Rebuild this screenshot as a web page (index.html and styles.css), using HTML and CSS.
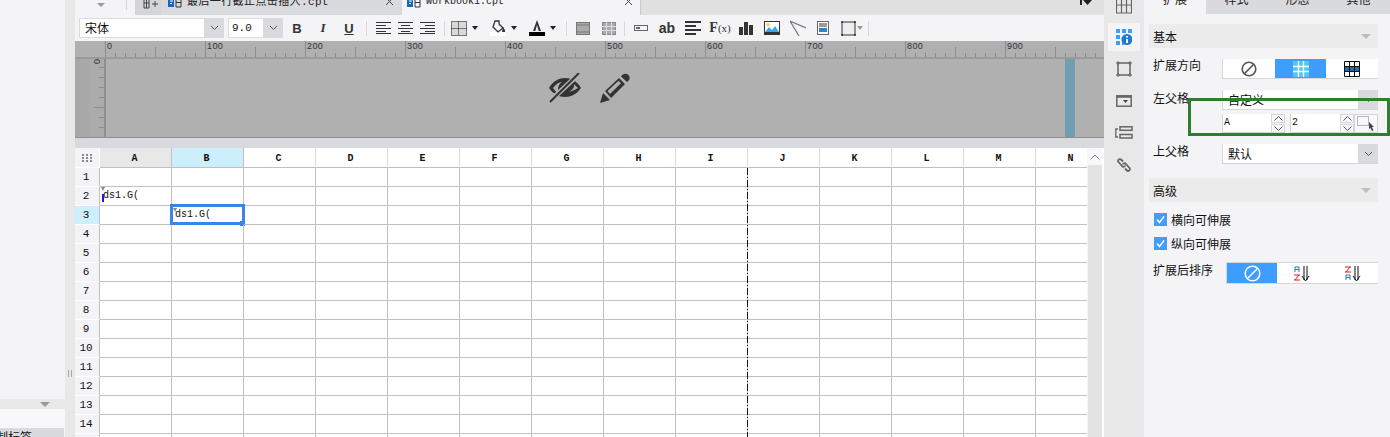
FILE: index.html
```html
<!DOCTYPE html>
<html lang="zh">
<head>
<meta charset="utf-8">
<title>报表设计器</title>
<link rel="stylesheet" href="styles.css">
</head>
<body>
<div class="app">
  <aside class="left">
    <div class="left-fill"></div>
    <div class="left-bar"><span class="tri"></span></div>
    <div class="left-white"></div>
    <div class="left-tab"><span>制标签</span></div>
  </aside>
  <div class="split"><span class="grip"></span></div>

  <main class="center">
    <div class="tabs">
      <div class="tab-lead"><span class="tri small"></span><span class="tab-sep"></span></div>
      <div class="tab tab-off">
        <svg class="plus-ic" width="16" height="10" viewBox="0 0 16 10"><path d="M1 -3V8H6V-3M1 3H6M3.5 -3V8M9 4H15M12 1V7" fill="none" stroke="#444"/></svg>
        <svg class="fr-ic" width="14" height="10" viewBox="0 0 14 10"><path d="M0 -2H6V7H0Z" fill="#1668b8"/><path d="M2 1H5M2 3.5H4" stroke="#fff"/><path d="M8 -2V7H13V-2M8 2.5H13" fill="none" stroke="#333"/></svg>
        <span class="tab-name cjk-mono">最后一行截止点击插入.cpt</span>
        <svg class="x-ic" width="10" height="10" viewBox="0 0 10 10"><path d="M1 -2L8 5M8 -2L1 5" stroke="#444" fill="none"/></svg>
      </div>
      <div class="tab tab-on">
        <svg class="fr-ic on" width="14" height="10" viewBox="0 0 14 10"><path d="M0 -2H6V7H0Z" fill="#1668b8"/><path d="M2 1H5M2 3.5H4" stroke="#fff"/><path d="M8 -2V7H13V-2M8 2.5H13" fill="none" stroke="#333"/></svg>
        <span class="tab-name mono">workbook1.cpt</span>
        <svg class="x-ic on" width="10" height="10" viewBox="0 0 10 10"><path d="M1 -2L8 5M8 -2L1 5" stroke="#444" fill="none"/></svg>
      </div>
      <div class="tab-rest">
        <svg class="more-ic" width="12" height="6" viewBox="0 0 12 6"><path d="M0 0H2V5H0ZM3 0H12L7.5 5Z" fill="#222"/></svg>
      </div>
    </div>

    <div class="toolbar">
      <div class="combo font"><span class="combo-val">宋体</span><span class="combo-btn"><svg width="9" height="6" viewBox="0 0 9 6"><path d="M1 1L4.5 4.5L8 1" fill="none" stroke="#555"/></svg></span></div>
      <div class="combo size"><span class="combo-val mono-l">9.0</span><span class="combo-btn"><svg width="9" height="6" viewBox="0 0 9 6"><path d="M1 1L4.5 4.5L8 1" fill="none" stroke="#555"/></svg></span></div>
      <button class="tb first b">B</button>
      <button class="tb i">I</button>
      <button class="tb u">U</button>
      <span class="sep s1"></span>
      <button class="tb w22"><svg width="15" height="12" viewBox="0 0 15 12"><path d="M0 .5H15M0 3.5H10M0 6.5H15M0 9.5H10M0 11.5H15" stroke="#333"/></svg></button>
      <button class="tb w22"><svg width="15" height="12" viewBox="0 0 15 12"><path d="M0 .5H15M3 3.5H12M0 6.5H15M3 9.5H12M0 11.5H15" stroke="#333"/></svg></button>
      <button class="tb w22"><svg width="15" height="12" viewBox="0 0 15 12"><path d="M0 .5H15M5 3.5H15M0 6.5H15M5 9.5H15M0 11.5H15" stroke="#333"/></svg></button>
      <span class="sep s2"></span>
      <button class="tb w16"><svg width="16" height="15" viewBox="0 0 16 15"><rect width="16" height="15" fill="#d8d8d8"/><path d="M.5 .5H15.500V14.500H.5ZM7.500 .5V14.500M.5 7.500H15.500" fill="none" stroke="#111" stroke-dasharray="1 1"/></svg></button>
      <span class="caret c1"></span>
      <button class="tb w16 m-fill"><svg width="16" height="16" viewBox="0 0 16 16"><rect y="12" width="16" height="4" fill="#fff"/><path d="M5 1H9V4L13 8L8 12L3 7Z" fill="none" stroke="#333" stroke-width="1.3"/><path d="M13 7L15 10V12H12Z" fill="#333"/></svg></button>
      <span class="caret c2"></span>
      <button class="tb w16 m-a"><svg width="16" height="16" viewBox="0 0 16 16"><path d="M4 11L8 0L12 11H9.7L8 5L6.300 11Z" fill="#333"/><rect y="12" width="16" height="4" fill="#000"/></svg></button>
      <span class="caret c3"></span>
      <span class="sep s3"></span>
      <button class="tb w14 m-g1"><svg width="14" height="13" viewBox="0 0 14 13"><rect x=".5" y=".5" width="13" height="12" fill="#aaa" stroke="#777"/><path d="M0 3H14M0 10H14" stroke="#777"/></svg></button>
      <button class="tb w14 m-g2"><svg width="14" height="13" viewBox="0 0 14 13"><rect x=".5" y=".5" width="13" height="12" fill="#aaa" stroke="#888"/><path d="M0 4.500H14M0 8.500H14M4.500 0V13M9.500 0V13" stroke="#ddd"/></svg></button>
      <span class="sep s4"></span>
      <button class="tb w14 m-f"><svg width="14" height="6" viewBox="0 0 14 6"><rect x=".5" y=".5" width="13" height="5" fill="none" stroke="#666"/><path d="M2 3H6" stroke="#666" stroke-width="2"/></svg></button>
      <button class="tb ab">ab</button>
      <button class="tb w16 m-para"><svg width="16" height="14" viewBox="0 0 16 14"><path d="M0 1H16M0 5H11M0 9H16M0 13H11" stroke="#333" stroke-width="2"/></svg></button>
      <button class="tb fx">F<small>(x)</small></button>
      <button class="tb w14 m-bar"><svg width="14" height="13" viewBox="0 0 14 13"><path d="M0 5H4V13H0ZM5 0H9V13H5ZM10 3H14V13H10Z" fill="#333"/></svg></button>
      <button class="tb w16 m-img"><svg width="16" height="14" viewBox="0 0 16 14"><rect x=".5" y=".5" width="15" height="13" fill="#fff" stroke="#333"/><rect y="11" width="16" height="3" fill="#333"/><path d="M1 11L5 6L8 9L11 5L15 11Z" fill="#39a7e6"/><circle cx="4" cy="3.500" r="1.500" fill="#f5c542"/></svg></button>
      <button class="tb w16 m-line"><svg width="16" height="16" viewBox="0 0 16 16"><path d="M0 1L16 8M0 1L9 16" fill="none" stroke="#777" stroke-width="1.200"/></svg></button>
      <button class="tb w12 m-doc"><svg width="12" height="14" viewBox="0 0 12 14"><rect x=".5" y=".5" width="11" height="13" fill="#fff" stroke="#666"/><path d="M2 3H10M2 5H10" stroke="#333"/><rect x="2" y="7" width="8" height="4" fill="#2d84c8"/></svg></button>
      <button class="tb w16 m-box"><svg width="15" height="15" viewBox="0 0 15 15"><rect x="1" y="1" width="13" height="13" fill="#eee" stroke="#333"/><path d="M0 1H2M13 1H15M0 14H2M13 14H15" stroke="#000"/></svg></button>
      <span class="caret grey"></span>
      <span class="sep s5"></span>
    </div>

    <div class="ruler-area">
      <div class="hruler">
        <div class="hr-inner">
          <span>0</span><span>100</span><span>200</span><span>300</span><span>400</span><span>500</span><span>600</span><span>700</span><span>800</span><span>900</span>
        </div>
      </div>
      <div class="page-row">
        <div class="gutter"></div>
        <div class="vruler"><span>0</span></div>
        <div class="page">
          <div class="page-icons">
            <svg width="32" height="30" viewBox="0 0 32 30"><path d="M0 15C4 8 10 5 16 5C22 5 28 8 32 15C28 21 22 24 16 24C10 24 4 21 0 15Z" fill="#333"/><path d="M4 15C7 11 10 9 13 9C9 11 8 17 10 21C8 20 6 18 4 15Z" fill="#b0b0b0"/><path d="M19 19C23 18 26 17 29 15C27 13 26 12 25 11C26 14 23 18 19 19Z" fill="#b0b0b0"/><path d="M0 29L30 1" stroke="#b0b0b0" stroke-width="5"/><path d="M1 29L30 0" stroke="#333" stroke-width="2"/></svg>
            <svg width="30" height="30" viewBox="0 0 30 30"><path d="M0 30L3 20L10 27Z" fill="#333"/><path d="M5 18L19 5L25 11L11 25ZM8.500 18.500L19.500 8M10.500 20.500" fill="#333"/><path d="M7.500 18L18.500 7.800L21 10.200L10 21Z" fill="#b0b0b0"/><path d="M21 3.500C23 .5 26 0 28.500 2C30.500 4.500 30 7 27 9Z" fill="#333"/></svg>
          </div>
          <div class="page-strip"></div>
          <div class="page-end"></div>
        </div>
      </div>
    </div>

    <div class="gap-bar"></div>

    <div class="sheet">
      <div class="sheet-clip">
        <table class="grid">
          <thead>
            <tr><th class="corner"><svg width="11" height="8" viewBox="0 0 11 8"><path d="M0 0h2v2H0zM4 0h2v2H4zM8 0h2v2H8zM0 3h2v2H0zM4 3h2v2H4zM8 3h2v2H8zM0 6h2v2H0zM4 6h2v2H4zM8 6h2v2H8z" fill="#8a8a8a"/></svg></th><th>A</th><th class="hot">B</th><th class="plain">C</th><th class="plain">D</th><th class="plain">E</th><th class="plain">F</th><th class="plain">G</th><th class="plain">H</th><th class="plain">I</th><th class="plain">J</th><th class="plain">K</th><th class="plain">L</th><th class="plain">M</th><th class="plain">N</th></tr>
          </thead>
          <tbody>
            <tr><th>1</th><td></td><td></td><td></td><td></td><td></td><td></td><td></td><td></td><td></td><td></td><td></td><td></td><td></td><td></td></tr>
            <tr><th>2</th><td class="val"><i class="mark blue"></i>ds1.G(</td><td></td><td></td><td></td><td></td><td></td><td></td><td></td><td></td><td></td><td></td><td></td><td></td><td></td></tr>
            <tr><th class="hot">3</th><td></td><td class="val sel">ds1.G(<b class="sel-box"><u class="handle"></u></b><i class="mark"></i></td><td></td><td></td><td></td><td></td><td></td><td></td><td></td><td></td><td></td><td></td><td></td><td></td></tr>
            <tr><th>4</th><td></td><td></td><td></td><td></td><td></td><td></td><td></td><td></td><td></td><td></td><td></td><td></td><td></td><td></td></tr>
            <tr><th>5</th><td></td><td></td><td></td><td></td><td></td><td></td><td></td><td></td><td></td><td></td><td></td><td></td><td></td><td></td></tr>
            <tr><th>6</th><td></td><td></td><td></td><td></td><td></td><td></td><td></td><td></td><td></td><td></td><td></td><td></td><td></td><td></td></tr>
            <tr><th>7</th><td></td><td></td><td></td><td></td><td></td><td></td><td></td><td></td><td></td><td></td><td></td><td></td><td></td><td></td></tr>
            <tr><th>8</th><td></td><td></td><td></td><td></td><td></td><td></td><td></td><td></td><td></td><td></td><td></td><td></td><td></td><td></td></tr>
            <tr><th>9</th><td></td><td></td><td></td><td></td><td></td><td></td><td></td><td></td><td></td><td></td><td></td><td></td><td></td><td></td></tr>
            <tr><th>10</th><td></td><td></td><td></td><td></td><td></td><td></td><td></td><td></td><td></td><td></td><td></td><td></td><td></td><td></td></tr>
            <tr><th>11</th><td></td><td></td><td></td><td></td><td></td><td></td><td></td><td></td><td></td><td></td><td></td><td></td><td></td><td></td></tr>
            <tr><th>12</th><td></td><td></td><td></td><td></td><td></td><td></td><td></td><td></td><td></td><td></td><td></td><td></td><td></td><td></td></tr>
            <tr><th>13</th><td></td><td></td><td></td><td></td><td></td><td></td><td></td><td></td><td></td><td></td><td></td><td></td><td></td><td></td></tr>
            <tr><th>14</th><td></td><td></td><td></td><td></td><td></td><td></td><td></td><td></td><td></td><td></td><td></td><td></td><td></td><td></td></tr>
            <tr><th></th><td></td><td></td><td></td><td></td><td></td><td></td><td></td><td></td><td></td><td></td><td></td><td></td><td></td><td></td></tr>
          </tbody>
        </table>
        <div class="page-break"></div>
      </div>
      <div class="vscroll">
        <div class="vs-up"><svg width="10" height="6" viewBox="0 0 10 6"><path d="M.5 5.500L5 1L9.500 5.500" fill="none" stroke="#888"/></svg></div>
        <div class="vs-thumb"></div>
      </div>
    </div>
  </main>

  <nav class="rail">
    <div class="rail-btn first"><svg width="16" height="18" viewBox="0 0 16 18"><path d="M.5 0V17H15.500V0M.5 9H15.500M5.500 0V17M10.500 0V17" fill="none" stroke="#666" stroke-width="1.200"/></svg></div>
    <div class="rail-btn active"><svg width="16" height="16" viewBox="0 0 16 16"><path d="M0 0h4v4H0zM6 0h4v4H6zM12 0h4v4h-4zM0 6h4v4H0zM0 12h4v4H0zM6 12h2v4H6z" fill="#3f9dff"/><circle cx="11" cy="10.500" r="5.500" fill="#1f7ad0"/><path d="M11 7v1.500M11 10v4" stroke="#fff" stroke-width="2"/></svg></div>
    <div class="rail-btn"><svg width="16" height="16" viewBox="0 0 16 16"><rect x="2" y="2" width="12" height="12" fill="none" stroke="#666" stroke-width="1.500"/><path d="M0 2H4M12 2H16M0 14H4M12 14H16M2 0V4M14 0V4M2 12V16M14 12V16" stroke="#666"/></svg></div>
    <div class="rail-btn"><svg width="16" height="12" viewBox="0 0 16 12"><rect x=".8" y=".8" width="14.400" height="10.400" fill="none" stroke="#666" stroke-width="1.500"/><rect x=".8" y=".8" width="14.400" height="2" fill="#666"/><path d="M7 5H12L9.500 8Z" fill="#444"/></svg></div>
    <div class="rail-btn"><svg width="18" height="14" viewBox="0 0 18 14"><rect x="5" y=".8" width="12" height="3.500" fill="none" stroke="#666" stroke-width="1.500"/><rect x="5" y="8.500" width="12" height="3.500" fill="none" stroke="#666" stroke-width="1.500"/><path d="M3 3H.8V11H3" fill="none" stroke="#666" stroke-width="1.300"/></svg></div>
    <div class="rail-btn"><svg width="16" height="16" viewBox="0 0 16 16"><path d="M7 4.500L5 2.500C3.500 1 1 3.500 2.500 5L6 9C7.500 10.500 9 9.500 9 8.500M9 11.500L11 13.500C12.500 15 15 12.500 13.500 11L10 7C8.500 5.500 7 6.500 7 7.500" fill="none" stroke="#666" stroke-width="1.800"/></svg></div>
  </nav>

  <section class="panel">
    <div class="ptabs">
      <div class="ptab on"><span>扩展</span></div>
      <div class="ptab"><span>样式</span></div>
      <div class="ptab"><span>形态</span></div>
      <div class="ptab"><span>其他</span></div>
    </div>
    <div class="phead first"><span>基本</span><span class="tri"></span></div>
    <div class="frow r-dir">
      <label class="flabel">扩展方向</label>
      <div class="seg">
        <span class="seg-item"><svg width="16" height="16" viewBox="0 0 16 16"><circle cx="8" cy="8" r="6.800" fill="none" stroke="#555" stroke-width="1.600"/><path d="M3 13L13 3" stroke="#555" stroke-width="1.600"/></svg></span>
        <span class="seg-item blue"><svg width="16" height="16" viewBox="0 0 16 16"><rect width="16" height="16" fill="#4cc9f0"/><path d="M5.500 0V16M10.500 0V16M0 5.500H16M0 10.500H16" stroke="#fff" stroke-width="1.400"/></svg></span>
        <span class="seg-item"><svg width="16" height="16" viewBox="0 0 16 16"><rect x=".5" y="5.500" width="15" height="5" fill="#2c6b9c"/><path d="M.5 .5H15.500V15.500H.5ZM5.500 0V16M10.500 0V16M0 5.500H16M0 10.500H16" fill="none" stroke="#111"/></svg></span>
      </div>
    </div>
    <div class="frow r-left">
      <label class="flabel">左父格</label>
      <div class="pcombo"><span>自定义</span><span class="pcombo-btn"><svg width="9" height="6" viewBox="0 0 9 6"><path d="M1 1L4.500 4.500L8 1" fill="none" stroke="#555"/></svg></span></div>
    </div>
    <div class="spin-row">
      <span class="sinput mono">A</span>
      <span class="spin"><i><svg width="9" height="5" viewBox="0 0 9 5"><path d="M.5 4.500L4.500 .5L8.500 4.500" fill="none" stroke="#555"/></svg></i><i><svg width="9" height="5" viewBox="0 0 9 5"><path d="M.5 .5L4.500 4.500L8.500 .5" fill="none" stroke="#555"/></svg></i></span>
      <span class="sinput second mono">2</span>
      <span class="spin"><i><svg width="9" height="5" viewBox="0 0 9 5"><path d="M.5 4.500L4.500 .5L8.500 4.500" fill="none" stroke="#555"/></svg></i><i><svg width="9" height="5" viewBox="0 0 9 5"><path d="M.5 .5L4.500 4.500L8.500 .5" fill="none" stroke="#555"/></svg></i></span>
      <span class="pick"><svg width="19" height="15" viewBox="0 0 19 15"><rect x=".5" y=".5" width="11" height="9" fill="none" stroke="#777" stroke-dasharray="1 1"/><path d="M12 6L17 11L15 11L16.500 14.500L15 15L13.500 12L12 13Z" fill="#444"/></svg></span>
    </div>
    <div class="frow r-top">
      <label class="flabel">上父格</label>
      <div class="pcombo"><span>默认</span><span class="pcombo-btn"><svg width="9" height="6" viewBox="0 0 9 6"><path d="M1 1L4.500 4.500L8 1" fill="none" stroke="#555"/></svg></span></div>
    </div>
    <div class="phead adv"><span>高级</span><span class="tri"></span></div>
    <div class="check c-first"><span class="box"><svg width="13" height="13" viewBox="0 0 13 13"><path d="M3 6.500L5.500 9.500L10 3.500" fill="none" stroke="#fff" stroke-width="1.500"/></svg></span>横向可伸展</div>
    <div class="check c-second"><span class="box"><svg width="13" height="13" viewBox="0 0 13 13"><path d="M3 6.500L5.500 9.500L10 3.500" fill="none" stroke="#fff" stroke-width="1.500"/></svg></span>纵向可伸展</div>
    <div class="frow r-sort">
      <label class="flabel sort">扩展后排序</label>
      <div class="seg sortseg">
        <span class="seg-item blue"><svg width="17" height="17" viewBox="0 0 17 17"><circle cx="8.500" cy="8.500" r="7.300" fill="none" stroke="#fff" stroke-width="1.500"/><path d="M3.500 13.500L13.500 3.500" stroke="#fff" stroke-width="1.500"/></svg></span>
        <span class="seg-item"><svg width="16" height="15" viewBox="0 0 16 15"><path d="M1 6V1H5V6M1 3.500H5" fill="none" stroke="#2f79a8"/><path d="M0 9H6M5 9L1 14M0 14H6" fill="none" stroke="#e8101a"/><path d="M10 0V14M13 0V14M8 10L11.500 15L15 10" fill="none" stroke="#111"/></svg></span>
        <span class="seg-item"><svg width="16" height="15" viewBox="0 0 16 15"><path d="M0 1H6M5 1L1 6M0 6H6" fill="none" stroke="#e8101a"/><path d="M1 14V9H5V14M1 11.500H5" fill="none" stroke="#2f79a8"/><path d="M10 0V14M13 0V14M8 10L11.500 15L15 10" fill="none" stroke="#111"/></svg></span>
      </div>
    </div>
  </section>
</div>
<div class="highlight"></div>
</body>
</html>
```

FILE: styles.css
```css
* { box-sizing: border-box; }
html, body { margin: 0; padding: 0; height: 437px; overflow: hidden; background: #f4f4f6; }
body { font: 12px "Noto Sans CJK SC", "Liberation Sans", sans-serif; color: #111; position: relative; }
svg { display: block; flex: none; overflow: hidden; }
.mono { font-family: "Liberation Mono", "Noto Sans CJK SC", monospace; }
.cjk-mono { font-family: "Liberation Mono", "Noto Sans CJK SC", monospace; }

.app { display: flex; width: 1390px; height: 437px; overflow: hidden; }

/* left */
.left { width: 65px; display: flex; flex-direction: column; background: #f4f4f6; }
.left-fill { height: 399px; }
.left-bar { height: 10px; background: #e8e8e8; display: flex; justify-content: flex-end; align-items: center; padding-right: 15px; }
.tri { display: block; width: 0; height: 0; border-left: 5px solid transparent; border-right: 5px solid transparent; border-top: 5px solid #9a9a9a; }
.tri.small { border-left-width: 4px; border-right-width: 4px; border-top-width: 4px; }
.left-white { height: 19px; background: #f8f8fa; }
.left-tab { flex: 1; background: #d9dadd; border-right: 1px solid #f4f4f6; overflow: hidden; font-size: 12px; line-height: 16px; padding-top: 1px; white-space: nowrap; }
.left-tab span { display: block; margin-left: -4px; }
.split { width: 10px; background: #e8e8e8; position: relative; }
.grip { position: absolute; left: 3px; top: 370px; width: 4px; height: 7px; border-left: 1px solid #aaa; border-right: 1px solid #aaa; }

/* center */
.center { width: 1029px; display: flex; flex-direction: column; background: #f4f4f6; }
.tabs { height: 15px; display: flex; overflow: hidden; flex: none; }
.tab-lead { width: 60px; display: flex; position: relative; padding: 3px 0 0 22px; }
.tab-sep { position: absolute; left: 51px; top: 0; width: 1px; height: 10px; background: #d5d5d5; }
.tab { display: flex; align-items: flex-start; overflow: hidden; }
.tab-off { width: 267px; background: linear-gradient(90deg, #d4d5d8 26px, #d9dadd 26px); padding-left: 8px; }
.tab-on { width: 239px; background: #f4f4f6; border-right: 1px solid #ccc; padding-left: 5px; }
.plus-ic { margin-right: 9px; }
.fr-ic { margin-right: 5px; }
.fr-ic.on { margin-right: 5px; }
.tab-name { font-size: 10px; line-height: 14px; margin-top: -5px; color: #222; white-space: nowrap; }
.tab-off .tab-name { width: 198px; font-size: 11px; letter-spacing: .4px; }
.tab-on .tab-name { width: 198px; letter-spacing: 0; }
.x-ic { margin-top: 0; }
.tab-rest { flex: 1; background: #e0e0e0; display: flex; justify-content: flex-end; padding-right: 12px; }

.toolbar { height: 26px; display: flex; align-items: center; padding-left: 4px; flex: none; background: #f4f4f6; }
.combo { display: flex; height: 20px; background: #fff; border: 1px solid #dcdde1; border-right: 0; }
.combo.font { width: 145px; }
.combo.size { width: 55px; margin-left: 4px; }
.combo-val { flex: 1; font-size: 12px; line-height: 18px; padding-left: 5px; }
.mono-l { font-family: "Liberation Mono", monospace; font-size: 11px; padding-left: 3px; }
.combo-btn { width: 20px; margin: -1px 0; background: #d9dadd; display: flex; align-items: center; justify-content: center; }
.tb { border: 0; background: none; padding: 0; width: 26px; height: 20px; display: flex; align-items: center; justify-content: center; color: #333; font: bold 13px "Liberation Sans", sans-serif; flex: none; }
.tb.first { margin-left: 1px; }
.tb.i { font-style: italic; font-family: "Liberation Serif", serif; }
.tb.u { text-decoration: underline; }
.w22 { width: 22px; }
.w16 { width: 16px; }
.w14 { width: 14px; }
.w12 { width: 12px; }
.sep { width: 1px; height: 15px; background: #d9d9dc; flex: none; }
.s1 { margin: 0 5px 0 4px; }
.s2 { margin: 0 6px; }
.s3 { margin: 0 9px 0 10px; }
.s4 { margin: 0 9px 0 8px; }
.s5 { margin-left: 5px; }
.caret { width: 0; height: 0; border-left: 3.500px solid transparent; border-right: 3.500px solid transparent; border-top: 4px solid #222; margin-left: 5px; flex: none; }
.caret.grey { border-top-color: #999; margin-left: 1px; }
.m-fill { margin-left: 12px; }
.m-a { margin-left: 12px; }
.m-g2 { margin-left: 12px; }
.ab { width: 22px; margin-left: 8px; font-size: 14px; }
.m-para { margin-left: 7px; }
.fx { width: 20px; margin-left: 9px; font: bold 14px "Liberation Serif", serif; }
.fx small { font-size: 11px; font-weight: normal; }
.m-bar { margin-left: 9px; }
.m-img { margin-left: 11px; }
.m-line { margin-left: 10px; }
.m-doc { margin-left: 11px; }
.m-box { margin-left: 11px; }

.ruler-area { height: 97px; background: #b0b0b0; display: flex; flex-direction: column; border-bottom: 1px solid #8f8f8f; flex: none; }
.hruler { height: 18px; padding-left: 30px; flex: none; border-bottom: 2px solid #9a9a9a; overflow: hidden; }
.hr-inner { display: flex; height: 16px;
  background-image:
    linear-gradient(90deg, #8c8c8c 1px, transparent 1px),
    linear-gradient(90deg, #8c8c8c 1px, transparent 1px),
    linear-gradient(90deg, #8c8c8c 1px, transparent 1px);
  background-size: 100px 16px, 100px 10px, 10px 4px;
  background-position: 0 0, 50px 6px, 0 12px;
  background-repeat: repeat-x;
}
.hr-inner span { width: 100px; flex: none; padding-left: 2px; font: 9px/11px "Liberation Sans", sans-serif; letter-spacing: .4px; color: #333; }
.page-row { flex: 1; display: flex; min-height: 0; }
.gutter { width: 14px; background: #a8a8a8; }
.vruler { width: 17px; background: #ababab; border-right: 2px solid #8f8f8f; position: relative;
  background-image: linear-gradient(#8c8c8c 1px, transparent 1px), linear-gradient(#8c8c8c 1px, transparent 1px);
  background-size: 5px 10px, 10px 50px;
  background-position: right 8px, right 48px;
  background-repeat: repeat-y;
}
.vruler span { position: absolute; left: 6px; top: -3px; font: 9px/11px "Liberation Sans", sans-serif; transform: rotate(-90deg); color: #333; }
.page { flex: 1; display: flex; position: relative; }
.page-icons { width: 959px; display: flex; justify-content: center; gap: 19px; padding: 14px 0 0 8px; flex: none; }
.page-strip { width: 10px; background: #6f9fae; flex: none; }
.page-end { flex: 1; }

.gap-bar { height: 10px; background: #d9dadd; flex: none; }

.sheet { flex: 1; display: flex; min-height: 0; background: #fff; }
.sheet-clip { width: 1012px; overflow: hidden; position: relative; }
.grid { border-collapse: separate; border-spacing: 0; table-layout: fixed; width: 1033px; font: 10px "Liberation Mono", monospace; color: #111; }
.grid th, .grid td { padding: 0; height: 19px; border-right: 1px solid #c0c0c0; border-bottom: 1px solid #c0c0c0; width: 72px; font-weight: normal; overflow: visible; position: relative; line-height: 18px; }
.grid thead th { height: 20px; line-height: 17px; padding: 2px 2px 0 0; background: #e8e8e8; font-weight: bold; text-align: center; }
.grid thead th.plain { background: #fff; border-right-color: #dedede; border-bottom-color: #c0c0c0; }
.grid th.corner { width: 25px; background: #f4f4f6; border: 0; border-right: 1px solid #fff; border-bottom: 1px solid #fff; padding: 0; }
.corner svg { margin: 0 auto; }
.grid thead th.hot, .grid tbody th.hot { background: #cdeefb; }
.grid tbody th { width: 25px; background: #f4f4f6; border-bottom-color: #fff; border-right-color: #c0c0c0; font-size: 11px; text-align: center; padding-right: 2px; }
.val { padding-left: 3px !important; white-space: nowrap; }
.mark { position: absolute; left: 1px; top: 0; width: 0; height: 0; border-left: 2px solid transparent; border-right: 2px solid transparent; border-top: 4px solid #888; }
.sel .mark { left: 1px; top: 2px; }
.mark.blue::after { content: ""; position: absolute; left: -1px; top: 3px; width: 2px; height: 8px; background: #1a1ae0; }
.sel-box { position: absolute; left: -2px; top: -2px; width: 75px; height: 21px; border: 3px solid #3a86e8; display: block; pointer-events: none; }
.handle { position: absolute; right: -3px; bottom: -4px; width: 5px; height: 5px; background: #3a86e8; border: 0; display: block; }
.page-break { position: absolute; left: 672px; top: 20px; bottom: 0; width: 1px;
  background: repeating-linear-gradient(#111 0 7px, transparent 7px 9px, #111 9px 10px, transparent 10px 12px); }
.vscroll { width: 16px; border-right: 1px solid #fff; background: #f4f4f6; display: flex; flex-direction: column; flex: none; }
.vs-up { height: 17px; display: flex; align-items: center; justify-content: center; background: #f8f8fa; }
.vs-thumb { flex: 1; background: #e3e3e3; margin-left: 1px; }

/* rail */
.rail { width: 40px; background: #e8e8e8; display: flex; flex-direction: column; align-items: center; }
.rail-btn { width: 32px; height: 32px; display: flex; align-items: center; justify-content: center; flex: none; }
.rail-btn.first { margin-top: -11px; }
.rail-btn.active { height: 28px; margin: 2px 0; background: #f4f4f6; }

/* panel */
.panel { width: 246px; background: #f4f4f6; padding: 0 12px 0 5px; position: relative; }
.ptabs { display: flex; height: 14px; margin: 0 -12px 0 -5px; background: #d9dadd; overflow: hidden; }
.ptab { width: 61px; text-align: center; font-size: 12px; line-height: 14px; color: #222; }
.ptab span { display: block; margin-top: -8px; }
.ptab.on { width: 62px; background: #f4f4f6; }
.phead { height: 24px; background: #ebebeb; display: flex; justify-content: space-between; align-items: center; padding: 0 7px 0 4px; font-size: 12px; }
.phead .tri { border-top-color: #bdbdbd; margin-right: 0; }
.phead.first { margin-top: 10px; }
.phead.adv { margin-top: 14px; }
.frow { display: flex; }
.flabel { width: 69px; margin-left: 4px; flex: none; font-size: 12px; line-height: 14px; }
.r-dir { margin-top: 11px; height: 20px; }
.r-left { margin-top: 11px; height: 20px; }
.r-top { margin-top: 11px; height: 20px; }
.seg { flex: 1; display: flex; background: #fff; border-left: 1px solid #d5d6da; border-bottom: 1px solid #d5d6da; border-top: 1px solid #d5d6da; }
.r-dir .seg { border-top: 0; }
.seg-item { flex: 1; display: flex; align-items: center; justify-content: center; }
.seg-item.blue { background: #3f9dff; }
.r-dir .seg-item.blue { flex: 0 0 51px; }
.r-dir .flabel { margin-top: -1px; }
.pcombo { flex: 1; display: flex; background: #fff; border-bottom: 1px solid #d5d6da; border-left: 1px solid #d5d6da; font-size: 12px; line-height: 20px; }
.pcombo > span:first-child { flex: 1; padding-left: 5px; }
.pcombo-btn { width: 20px; background: #d9dadd; display: flex; align-items: center; justify-content: center; }
.r-left .flabel { margin-top: 1px; }
.spin-row { display: flex; margin: 4px 0 0 73px; height: 19px; }
.sinput { width: 49px; background: #fff; border-bottom: 1px solid #d5d6da; border-left: 1px solid #d5d6da; font-size: 10px; line-height: 18px; padding-left: 1px; }
.sinput.second { margin-left: 5px; width: 50px; }
.spin { width: 14px; display: flex; flex-direction: column; gap: 1px; }
.spin i { flex: 1; background: #f8f8fa; border: 1px solid #d5d6da; display: flex; align-items: center; justify-content: center; }
.pick { width: 24px; background: #f8f8fa; border: 1px solid #d5d6da; display: flex; align-items: center; justify-content: center; }
.check { display: flex; align-items: center; height: 14px; padding-left: 5px; font-size: 12px; }
.box { width: 13px; height: 13px; background: #3f9dff; margin-right: 4px; flex: none; }
.c-first { margin-top: 10px; }
.c-second { margin-top: 10px; }
.r-sort { margin-top: 12px; height: 22px; }
.flabel.sort { width: 73px; margin-top: 1px; }
.sortseg .seg-item { flex: 0 0 50px; }
.sortseg .seg-item:last-child { flex: 1; }

.highlight { position: absolute; left: 1188px; top: 98px; width: 202px; height: 38px; border: 3px solid #2e7d32; pointer-events: none; }
```
